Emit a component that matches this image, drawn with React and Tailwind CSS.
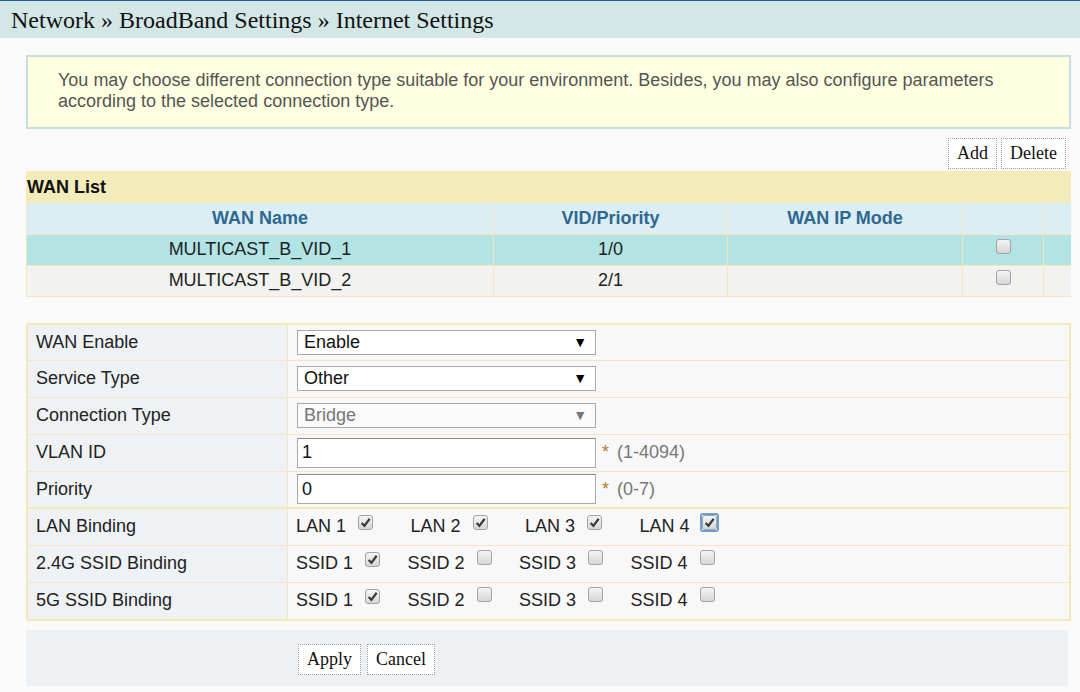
import React from "react";

const sans = { fontFamily: '"Liberation Sans", Arial, sans-serif' };
const serif = { fontFamily: '"Liberation Serif", "Times New Roman", serif' };

const wanList = [
    { name: "MULTICAST_B_VID_1", vid: "1/0", active: true },
    { name: "MULTICAST_B_VID_2", vid: "2/1", active: false },
];

// old style grey checkbox with a small tick
const Check = ({ checked, focused }) => (
    <span
        className={`relative -top-[4px] inline-flex items-center justify-center rounded-[3px] ${
            focused ? "h-[19px] w-[19px] border-2 border-[#6b9fd2]" : "h-[15px] w-[15px]"
        }`}
    >
        <span className="flex h-[15px] w-[15px] items-center justify-center rounded-[3px] border border-[#a3a3a3] bg-linear-to-b from-[#f5f5f5] to-[#d6d6d6]">
            {checked && (
                <svg width="11" height="11" viewBox="0 0 10 10">
                    <path d="M1.5 5.5 L4 8 L8.8 1.6" fill="none" stroke="#3a3a3a" strokeWidth="2" />
                </svg>
            )}
        </span>
    </span>
);

const Select = ({ value, disabled }) => (
    <div
        className={`flex h-[25px] w-[299px] items-center justify-between border border-[#a9a9a9] pl-[6px] pr-[8px] ${
            disabled ? "bg-[#fafafa] text-[#777]" : "bg-white text-[#111]"
        }`}
    >
        <span>{value}</span>
        <span className={`text-[14px] ${disabled ? "text-[#777]" : "text-black"}`}>▼</span>
    </div>
);

const TextInput = ({ value, hint }) => (
    <div className="flex items-center">
        <div className="flex h-[30px] w-[299px] items-center border border-[#a9a9a9] border-t-[#8a8a8a] bg-white pl-[4px] text-[#111]">
            {value}
        </div>
        <span className="ml-[6px] text-[#b5822c]">*</span>
        <span className="ml-[8px] text-[#777]">{hint}</span>
    </div>
);

const Binding = ({ items, itemWidth }) => (
    <div className="flex items-center">
        {items.map((it) => (
            <div key={it.label} className={`flex items-center ${itemWidth}`}>
                <span>{it.label}</span>
                <span className={it.focused ? "ml-[10px]" : "ml-[12px]"}>
                    <Check checked={it.checked} focused={it.focused} />
                </span>
            </div>
        ))}
    </div>
);

const FormRow = ({ label, children, className }) => (
    <div className={`flex ${className}`}>
        <div className="flex w-[260px] items-center border-r border-[#f1e8c2] bg-[#eef2f5] pl-[8px]">{label}</div>
        <div className="flex flex-1 items-center bg-[#f8f8f8] pl-[9px]">{children}</div>
    </div>
);

const Button = ({ children }) => (
    <button
        className="h-[31px] border border-dotted border-[#9a9a9a] bg-white px-[8px] text-[18px] text-[#111]"
        style={serif}
    >
        {children}
    </button>
);

export default function App() {
    const lan = [1, 2, 3, 4].map((n) => ({ label: `LAN ${n}`, checked: true, focused: n === 4 }));
    const ssid = [1, 2, 3, 4].map((n) => ({ label: `SSID ${n}`, checked: n === 1 }));

    return (
        <div className="min-h-[692px] w-full bg-[#fafafa] text-[18px] text-[#222]" style={sans}>
            {/* breadcrumb */}
            <div className="flex h-[38px] items-center border-t border-[#2d5f8e] bg-[#d3e7e7] pl-[11px] text-[24px] text-[#111]" style={serif}>
                Network » BroadBand Settings » Internet Settings
            </div>

            <div className="pl-[26px] pr-[9px]">
                {/* notice */}
                <div className="mt-[17px] h-[74px] border-2 border-[#c9dcdf] bg-[#ffffe1] pl-[30px] pt-[13px] leading-[21px] text-[#555]">
                    You may choose different connection type suitable for your environment. Besides, you may also configure parameters
                    <br />
                    according to the selected connection type.
                </div>

                <div className="mt-[9px] flex justify-end gap-[4px] pr-[5px]">
                    <Button>Add</Button>
                    <Button>Delete</Button>
                </div>

                {/* WAN list */}
                <div className="mt-[2px] flex h-[32px] items-center bg-[#f3ecba] pl-[1px] font-bold text-[#111]">WAN List</div>
                <table className="w-full table-fixed border-collapse border-b border-l border-[#f1e8c2]">
                    <thead>
                        <tr className="h-[31px] bg-[#daeef4] font-bold text-[#2f6790]">
                            <th className="w-[467px] border-r border-[#f1e8c2] font-bold">WAN Name</th>
                            <th className="w-[234px] border-r border-[#f1e8c2] font-bold">VID/Priority</th>
                            <th className="w-[235px] border-r border-[#f1e8c2] font-bold">WAN IP Mode</th>
                            <th className="w-[81px] border-r border-[#f1e8c2]"></th>
                            <th></th>
                        </tr>
                    </thead>
                    <tbody>
                        {wanList.map((w) => (
                            <tr
                                key={w.name}
                                className={`h-[31px] border-t border-[#f1e8c2] text-center ${w.active ? "bg-[#b3e4e4]" : "bg-[#f2f2f0]"}`}
                            >
                                <td className="border-r border-[#f1e8c2]">{w.name}</td>
                                <td className="border-r border-[#f1e8c2]">{w.vid}</td>
                                <td className="border-r border-[#f1e8c2]"></td>
                                <td className="border-r border-[#f1e8c2]">
                                    <span className="relative top-[3px] inline-block">
                                        <Check />
                                    </span>
                                </td>
                                <td></td>
                            </tr>
                        ))}
                    </tbody>
                </table>

                {/* WAN settings form */}
                <div className="mt-[26px] border-2 border-[#f3e9b8]">
                    <FormRow label="WAN Enable" className="h-[36px] border-b border-[#f1e8c2]">
                        <Select value="Enable" />
                    </FormRow>
                    <FormRow label="Service Type" className="h-[37px] border-b border-[#f1e8c2]">
                        <Select value="Other" />
                    </FormRow>
                    <FormRow label="Connection Type" className="h-[37px] border-b border-[#f1e8c2]">
                        <Select value="Bridge" disabled />
                    </FormRow>
                    <FormRow label="VLAN ID" className="h-[37px] border-b border-[#f1e8c2]">
                        <TextInput value="1" hint="(1-4094)" />
                    </FormRow>
                    <FormRow label="Priority" className="h-[37px] border-b-2 border-[#f3e9b8]">
                        <TextInput value="0" hint="(0-7)" />
                    </FormRow>
                    <FormRow label="LAN Binding" className="h-[37px] border-b border-[#f1e8c2]">
                        <div className="-ml-[1px]">
                            <Binding items={lan} itemWidth="w-[114.5px]" />
                        </div>
                    </FormRow>
                    <FormRow label="2.4G SSID Binding" className="h-[37px] border-b border-[#f1e8c2]">
                        <div className="-ml-[1px]">
                            <Binding items={ssid} itemWidth="w-[111.5px]" />
                        </div>
                    </FormRow>
                    <FormRow label="5G SSID Binding" className="h-[36px]">
                        <div className="-ml-[1px]">
                            <Binding items={ssid} itemWidth="w-[111.5px]" />
                        </div>
                    </FormRow>
                </div>

                {/* actions */}
                <div className="mr-[3px] mt-[9px] flex h-[56px] items-start gap-[6px] bg-[#eef1f4] pl-[272px] pt-[14px]">
                    <Button>Apply</Button>
                    <Button>Cancel</Button>
                </div>
            </div>
        </div>
    );
}
